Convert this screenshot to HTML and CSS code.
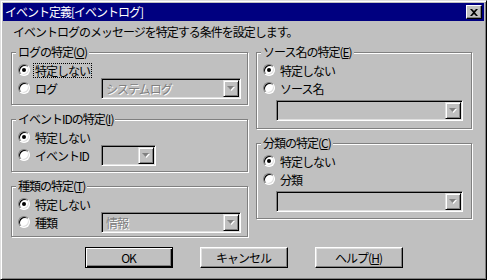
FILE: index.html
```html
<!DOCTYPE html>
<html lang="ja">
<head>
    <meta charset="UTF-8">
    <title>イベント定義[イベントログ]</title>
    <link rel="stylesheet" href="styles.css">
</head>
<body>
    <div class="window">
        <div class="titlebar">
            <span class="title">イベント定義[イベントログ]</span>
            <span class="close">
                <svg width="8" height="7" viewBox="0 0 8 7"><path d="M0 0h2l2 2 2-2h2L5 3.5 8 7H6L4 5 2 7H0l3-3.5z" fill="#000"/></svg>
            </span>
        </div>
        <div class="content">
            <div class="subtitle">イベントログのメッセージを特定する条件を設定します。</div>
            <div class="columns">
                <div class="column">
                    <div class="group g1">
                        <span class="legend">ログの特定(<u>O</u>)</span>
                        <div class="option">
                            <span class="radio checked"></span>
                            <span class="label focus">特定しない</span>
                        </div>
                        <div class="option">
                            <span class="radio"></span>
                            <span class="label fixed">ログ</span>
                            <div class="combo">
                                <span class="combo-text">システムログ</span>
                                <span class="combo-btn"><svg width="8" height="5" viewBox="0 0 8 5"><path d="M1 1h7L4.5 5z" fill="#fff"/><path d="M0 0h7L3.5 4z" fill="#808080"/></svg></span>
                            </div>
                        </div>
                    </div>
                    <div class="group g2">
                        <span class="legend">イベントIDの特定(<u>I</u>)</span>
                        <div class="option">
                            <span class="radio checked"></span>
                            <span class="label">特定しない</span>
                        </div>
                        <div class="option">
                            <span class="radio"></span>
                            <span class="label fixed">イベントID</span>
                            <div class="combo small">
                                <span class="combo-text"></span>
                                <span class="combo-btn"><svg width="8" height="5" viewBox="0 0 8 5"><path d="M1 1h7L4.5 5z" fill="#fff"/><path d="M0 0h7L3.5 4z" fill="#808080"/></svg></span>
                            </div>
                        </div>
                    </div>
                    <div class="group g3">
                        <span class="legend">種類の特定(<u>T</u>)</span>
                        <div class="option">
                            <span class="radio checked"></span>
                            <span class="label">特定しない</span>
                        </div>
                        <div class="option">
                            <span class="radio"></span>
                            <span class="label fixed">種類</span>
                            <div class="combo">
                                <span class="combo-text">情報</span>
                                <span class="combo-btn"><svg width="8" height="5" viewBox="0 0 8 5"><path d="M1 1h7L4.5 5z" fill="#fff"/><path d="M0 0h7L3.5 4z" fill="#808080"/></svg></span>
                            </div>
                        </div>
                    </div>
                </div>
                <div class="column">
                    <div class="group r1">
                        <span class="legend">ソース名の特定(<u>E</u>)</span>
                        <div class="option">
                            <span class="radio checked"></span>
                            <span class="label">特定しない</span>
                        </div>
                        <div class="option">
                            <span class="radio"></span>
                            <span class="label">ソース名</span>
                        </div>
                        <div class="combo wide">
                            <span class="combo-text"></span>
                            <span class="combo-btn"><svg width="8" height="5" viewBox="0 0 8 5"><path d="M1 1h7L4.5 5z" fill="#fff"/><path d="M0 0h7L3.5 4z" fill="#808080"/></svg></span>
                        </div>
                    </div>
                    <div class="group r2">
                        <span class="legend">分類の特定(<u>C</u>)</span>
                        <div class="option">
                            <span class="radio checked"></span>
                            <span class="label">特定しない</span>
                        </div>
                        <div class="option">
                            <span class="radio"></span>
                            <span class="label">分類</span>
                        </div>
                        <div class="combo wide">
                            <span class="combo-text"></span>
                            <span class="combo-btn"><svg width="8" height="5" viewBox="0 0 8 5"><path d="M1 1h7L4.5 5z" fill="#fff"/><path d="M0 0h7L3.5 4z" fill="#808080"/></svg></span>
                        </div>
                    </div>
                </div>
            </div>
            <div class="buttons">
                <button class="default">OK</button>
                <button>キャンセル</button>
                <button>ヘルプ(<u>H</u>)</button>
            </div>
        </div>
    </div>
</body>
</html>
```

FILE: styles.css
```css
body {
    margin: 0;
    background-color: #c0c0c0;
    font-family: "Noto Sans CJK JP", "Noto Sans", sans-serif;
    font-size: 12px;
    letter-spacing: -1px;
    color: #000;
}

.window {
    width: 487px;
    height: 280px;
    box-sizing: border-box;
    border: 1px solid;
    border-color: #dfdfdf #000 #000 #dfdfdf;
    box-shadow: inset 1px 1px #fff, inset -1px -1px #808080;
    padding: 2px;
    background-color: #c0c0c0;
}

.titlebar {
    height: 18px;
    background-color: #000080;
    color: #fff;
    display: flex;
    align-items: center;
    justify-content: space-between;
    padding: 0 2px 0 2px;
}

.title {
    line-height: 14px;
}

.close {
    width: 16px;
    height: 14px;
    box-sizing: border-box;
    background-color: #c0c0c0;
    border: 1px solid;
    border-color: #fff #000 #000 #fff;
    box-shadow: inset -1px -1px #808080;
    display: flex;
    align-items: center;
    justify-content: center;
    padding-right: 1px;
}

.content {
    padding: 4px 8px 0 8px;
}

.subtitle {
    line-height: 14px;
    padding-left: 2px;
}

.columns {
    display: grid;
    grid-template-columns: 237px 216px;
    column-gap: 8px;
    margin-top: 13px;
}

.column {
    display: flex;
    flex-direction: column;
    gap: 14px;
}

.group {
    position: relative;
    box-sizing: border-box;
    border: 1px solid #808080;
    box-shadow: inset 1px 1px #fff, 1px 1px #fff;
    padding: 8px 0 0 6px;
}

.g1 { height: 53px; }
.g2 { height: 53px; }
.g3 { height: 51px; }
.r1 { height: 77px; }
.r2 { height: 76px; }

.legend {
    position: absolute;
    top: -8px;
    left: 4px;
    line-height: 14px;
    padding: 0 2px;
    background-color: #c0c0c0;
}

.option {
    display: flex;
    align-items: center;
    height: 18px;
}

.radio {
    position: relative;
    width: 12px;
    height: 12px;
    box-sizing: border-box;
    border-radius: 50%;
    border: 1px solid;
    border-color: #808080 #fff #fff #808080;
    box-shadow: inset 1px 1px #000, inset -1px -1px #dfdfdf;
    background-color: #fff;
    margin-right: 3px;
    flex-shrink: 0;
}

.radio.checked::after {
    content: "";
    position: absolute;
    left: 3px;
    top: 3px;
    width: 4px;
    height: 4px;
    border-radius: 50%;
    background-color: #000;
}

.label {
    line-height: 13px;
    padding: 0 1px;
    border: 1px dotted transparent;
    white-space: nowrap;
}

.label.fixed {
    width: 68px;
    box-sizing: border-box;
}

.label.focus {
    border-color: #000;
}

.combo {
    width: 140px;
    height: 21px;
    box-sizing: border-box;
    border: 1px solid;
    border-color: #808080 #fff #fff #808080;
    box-shadow: inset 1px 1px #000, inset -1px -1px #dfdfdf;
    padding: 1px;
    display: flex;
    flex-shrink: 0;
}

.combo.small {
    width: 55px;
}

.combo.wide {
    width: 187px;
    margin: 3px 0 0 13px;
}

.combo-text {
    flex: 1;
    line-height: 17px;
    padding-left: 3px;
    color: #808080;
    text-shadow: 1px 1px #fff;
}

.combo-btn {
    width: 16px;
    height: 17px;
    box-sizing: border-box;
    border: 1px solid;
    border-color: #dfdfdf #000 #000 #dfdfdf;
    box-shadow: inset 1px 1px #fff, inset -1px -1px #808080;
    display: flex;
    align-items: center;
    justify-content: center;
}

.buttons {
    display: flex;
    justify-content: center;
    gap: 27px;
    margin-top: 10px;
}

.buttons button {
    width: 88px;
    height: 21px;
    box-sizing: border-box;
    font-family: inherit;
    font-size: 12px;
    letter-spacing: -1px;
    color: #000;
    background-color: #c0c0c0;
    border: 1px solid;
    border-color: #fff #000 #000 #fff;
    box-shadow: inset -1px -1px #808080, inset 1px 1px #dfdfdf;
    padding: 0;
    line-height: 17px;
}

.buttons button.default {
    border-color: #000;
    box-shadow: inset 1px 1px #fff, inset -1px -1px #000, inset -2px -2px #808080;
}
```
